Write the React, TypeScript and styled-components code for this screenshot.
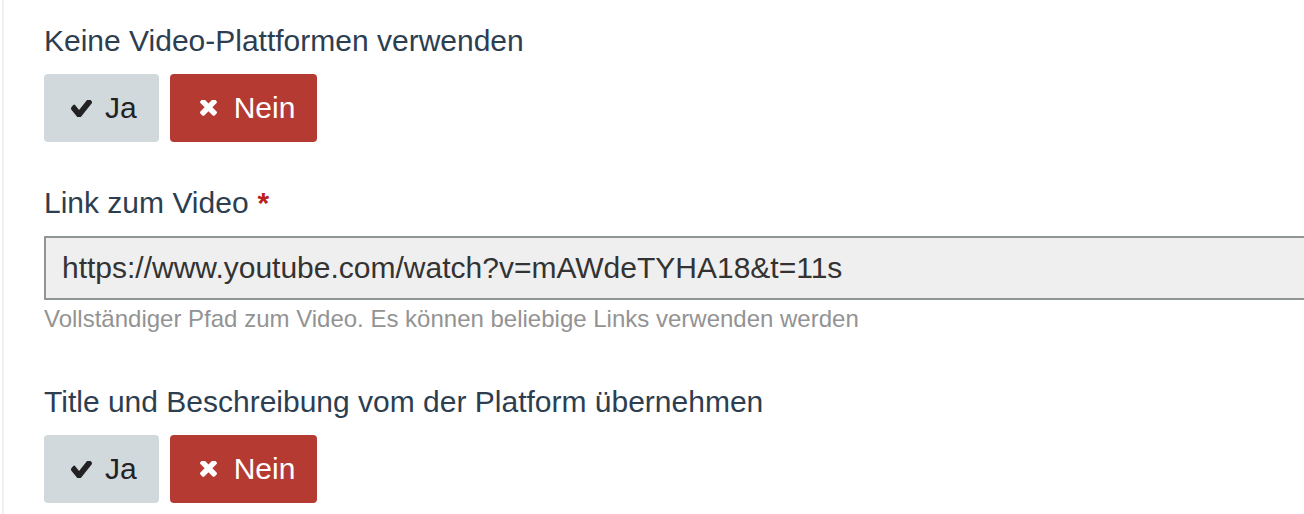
import React from "react";
import styled, { createGlobalStyle } from "styled-components";

const GlobalStyle = createGlobalStyle`
  html, body { margin: 0; padding: 0; background: #ffffff; }
  body { font-family: "Liberation Sans", Arial, Helvetica, sans-serif; overflow: hidden; }
`;

const Page = styled.div`
  display: flex;
  flex-direction: column;
  gap: 40px;
  margin-left: 2px;
  border-left: 2px solid #f0f0f0;
  padding: 20px 0 0 40px;
  height: 514px;
  box-sizing: border-box;
  overflow: hidden;
`;

const FormGroup = styled.div`
  display: flex;
  flex-direction: column;
  align-items: flex-start;
`;

const Label = styled.label`
  font-size: 30px;
  line-height: 42px;
  color: #2c3e50;
  margin-bottom: 12px;
  white-space: nowrap;
`;

const Required = styled.span`
  color: #b8211c;
  font-weight: bold;
  margin-left: 9px;
`;

const ButtonGroup = styled.div`
  display: flex;
  gap: 11px;
`;

const ToggleButton = styled.button<{ $variant: "neutral" | "danger" }>`
  display: flex;
  align-items: center;
  height: 68px;
  padding: 0 22px;
  border: none;
  border-radius: 4px;
  font-family: "Liberation Sans", Arial, Helvetica, sans-serif;
  font-size: 30px;
  line-height: 42px;
  cursor: pointer;
  background: ${(p) => (p.$variant === "danger" ? "#b53a32" : "#d2d9dd")};
  color: ${(p) => (p.$variant === "danger" ? "#ffffff" : "#222222")};
`;

const IconSlot = styled.span<{ $width: number }>`
  display: flex;
  align-items: center;
  justify-content: center;
  width: ${(p) => p.$width}px;
  margin-right: 9px;
`;

const TextInput = styled.input`
  box-sizing: border-box;
  width: 1300px;
  height: 64px;
  border: 2px solid #8f9593;
  border-right: none;
  background: #efefef;
  padding: 0 16px;
  font-family: "Liberation Sans", Arial, Helvetica, sans-serif;
  font-size: 30px;
  color: #333333;
  outline: none;
`;

const HelpText = styled.div`
  font-size: 24px;
  line-height: 34px;
  color: #939393;
  margin: 2px 0 5px;
  white-space: nowrap;
`;

const CheckIcon = () => (
  <svg width="21" height="17" viewBox="121 430 1550 996" preserveAspectRatio="none" fill="currentColor">
    <path d="M1671 566q0 40-28 68l-724 724-136 136q-28 28-68 28t-68-28l-136-136-362-362q-28-28-28-68t28-68l136-136q28-28 68-28t68 28l294 295 656-657q28-28 68-28t68 28l136 136q28 28 28 68z" />
  </svg>
);

const TimesIcon = () => (
  <svg width="17" height="17" viewBox="110 450 1188 1188" preserveAspectRatio="none" fill="currentColor">
    <path d="M1298 1322q0 40-28 68l-136 136q-28 28-68 28t-68-28l-294-294-294 294q-28 28-68 28t-68-28l-136-136q-28-28-28-68t28-68l294-294-294-294q-28-28-28-68t28-68l136-136q28-28 68-28t68 28l294 294 294-294q28-28 68-28t68 28l136 136q28 28 28 68t-28 68l-294 294 294 294q28 28 28 68z" />
  </svg>
);

const YesNo = () => (
  <ButtonGroup>
    <ToggleButton $variant="neutral" type="button">
      <IconSlot $width={30}>
        <CheckIcon />
      </IconSlot>
      Ja
    </ToggleButton>
    <ToggleButton $variant="danger" type="button">
      <IconSlot $width={33}>
        <TimesIcon />
      </IconSlot>
      Nein
    </ToggleButton>
  </ButtonGroup>
);

export default function App() {
  return (
    <>
      <GlobalStyle />
      <Page>
        <FormGroup>
          <Label>Keine Video-Plattformen verwenden</Label>
          <YesNo />
        </FormGroup>
        <FormGroup>
          <Label>
            Link zum Video<Required>*</Required>
          </Label>
          <TextInput readOnly value="https://www.youtube.com/watch?v=mAWdeTYHA18&t=11s" />
          <HelpText>Vollständiger Pfad zum Video. Es können beliebige Links verwenden werden</HelpText>
        </FormGroup>
        <FormGroup>
          <Label>Title und Beschreibung vom der Platform übernehmen</Label>
          <YesNo />
        </FormGroup>
      </Page>
    </>
  );
}
